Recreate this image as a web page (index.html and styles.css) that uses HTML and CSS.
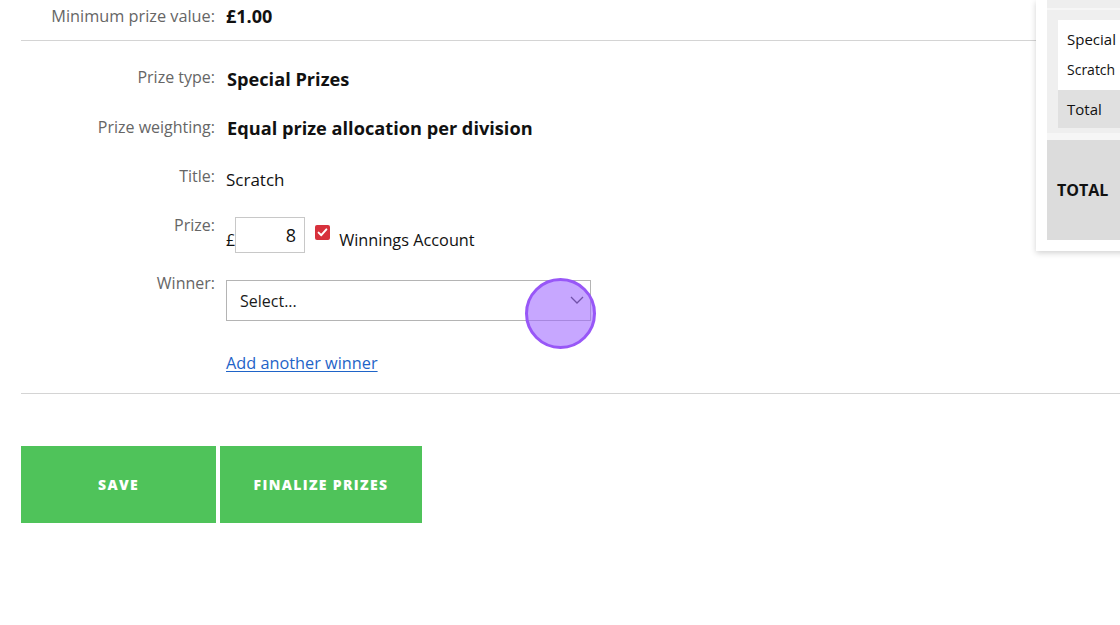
FILE: index.html
```html
<!DOCTYPE html>
<html>
<head>
<meta charset="utf-8">
<link rel="stylesheet" href="styles.css">
</head>
<body>
<div class="page">
  <div class="summary-row">
    <div class="row r1">
      <div class="label">Minimum prize value:</div>
      <div class="value money">£1.00</div>
    </div>
  </div>
  <hr class="rule rule-top">
  <div class="row r2">
    <div class="label">Prize type:</div>
    <div class="value strong">Special Prizes</div>
  </div>
  <div class="row r3">
    <div class="label">Prize weighting:</div>
    <div class="value strong">Equal prize allocation per division</div>
  </div>
  <div class="row r4">
    <div class="label">Title:</div>
    <div class="value plain">Scratch</div>
  </div>
  <div class="row r5">
    <div class="label">Prize:</div>
    <div class="value prize">
      <span class="pound">£</span>
      <span class="amount">8</span>
      <span class="check"><svg width="15" height="15" viewBox="0 0 15 15"><rect width="15" height="15" rx="2" fill="#d7313c"/><path d="M3.6 7.6 L6.3 10.2 L11.4 4.4" fill="none" stroke="#fff" stroke-width="2" stroke-linecap="round" stroke-linejoin="round"/></svg></span>
      <span class="check-label">Winnings Account</span>
    </div>
  </div>
  <div class="row r6">
    <div class="label">Winner:</div>
    <div class="value">
      <div class="select">
        <span>Select...</span>
        <svg class="chev" width="14" height="8" viewBox="0 0 14 8"><path d="M1 1 L7 7 L13 1" fill="none" stroke="#333" stroke-width="1.3"/></svg>
        <div class="click-dot"></div>
      </div>
    </div>
  </div>
  <div class="row r7">
    <div class="label"></div>
    <div class="value"><a class="link" href="#">Add another winner</a></div>
  </div>
  <hr class="rule rule-bottom">
  <div class="buttons">
    <button class="btn btn-save">SAVE</button>
    <button class="btn btn-final">FINALIZE PRIZES</button>
  </div>
</div>

<aside class="side-card">
  <div class="side-top"></div>
  <div class="side-section">
    <div class="side-table">
      <div class="side-head">Special Prizes</div>
      <div class="side-item">Scratch</div>
      <div class="side-total">Total</div>
    </div>
  </div>
  <div class="side-grand">TOTAL</div>
</aside>
</body>
</html>
```

FILE: styles.css
```css
html, body {
  margin: 0;
  padding: 0;
  background: #fff;
}
body {
  font-family: "Open Sans", "Noto Sans", sans-serif;
  color: #111;
  width: 1120px;
  height: 625px;
  overflow: hidden;
  position: relative;
}
.page {
  padding-left: 21px;
}
.summary-row {
  padding-top: 4px;
}
.row {
  display: grid;
  grid-template-columns: 194px 1fr;
  column-gap: 11px;
  align-items: start;
}
.label {
  text-align: right;
  font-size: 16px;
  line-height: 24px;
  color: #666;
}
.r1 .label { font-size: 16.3px; }
.value {
  line-height: 24px;
}
.money {
  font-size: 18px;
  font-weight: 700;
  color: #111;
}
.strong {
  font-size: 18.2px;
  font-weight: 700;
  color: #111;
  margin-left: 1px;
}
.plain {
  font-size: 17px;
  color: #111;
}
.rule {
  border: 0;
  height: 1px;
  margin: 0;
}
.rule-top {
  margin-top: 12px;
  background: #d4d4d4;
  width: 1015px;
}
.rule-bottom {
  margin-top: 18px;
  background: #d4d4d4;
}
.r2 { margin-top: 24px; }
.r2 .strong { padding-top: 2px; }
.r3 { margin-top: 24px; }
.r3 .strong { padding-top: 1px; }
.r4 { margin-top: 24px; }
.r4 .plain { padding-top: 4px; }
.r5 { margin-top: 21px; }
.prize {
  display: flex;
  align-items: flex-end;
  padding-top: 4px;
}
.pound {
  font-size: 16px;
  line-height: 24px;
  margin-bottom: 1px;
  color: #111;
}
.amount {
  box-sizing: border-box;
  width: 70px;
  height: 36px;
  border: 1px solid #c8c8c8;
  text-align: right;
  font-size: 18px;
  line-height: 34px;
  padding-right: 8px;
  color: #111;
}
.check {
  display: block;
  width: 15px;
  height: 15px;
  margin-left: 10px;
  margin-bottom: 13px;
}
.check svg { display: block; }
.check-label {
  font-size: 16.3px;
  line-height: 24px;
  margin-left: 9px;
  margin-bottom: 1px;
  color: #111;
}
.r6 { margin-top: 18px; }
.r6 .value { padding-top: 9px; }
.select {
  position: relative;
  box-sizing: border-box;
  width: 365px;
  height: 41px;
  border: 1px solid #b4b4b4;
  display: flex;
  align-items: center;
  padding-left: 13px;
  font-size: 16px;
  color: #1a1a1a;
}
.chev {
  position: absolute;
  right: 6px;
  top: 15px;
}
.click-dot {
  position: absolute;
  left: 298px;
  top: -3px;
  width: 65px;
  height: 65px;
  border-radius: 50%;
  border: 3px solid #9857f7;
  background: rgba(158, 104, 255, 0.58);
}
.r7 { margin-top: 30px; }
.link {
  font-size: 16.3px;
  color: #1f64c8;
  text-decoration: underline;
  text-underline-offset: 2px;
}
.buttons {
  display: flex;
  gap: 4px;
  margin-top: 52px;
}
.btn {
  border: 0;
  background: #4fc35a;
  color: #fff;
  font-family: "Open Sans", "Noto Sans", sans-serif;
  font-size: 14px;
  font-weight: 800;
  letter-spacing: 1.35px;
  height: 77px;
  padding: 0;
  cursor: pointer;
}
.btn-save { width: 195px; }
.btn-final { width: 202px; }

.side-card {
  position: absolute;
  left: 1036px;
  top: 0;
  width: 120px;
  height: 251px;
  background: #fff;
  box-shadow: 0 2px 6px rgba(0,0,0,0.18);
  box-sizing: border-box;
  padding: 0 0 11px 11px;
}
.side-top {
  height: 8px;
  background: #eeeeee;
  border-bottom: 2px solid #f6f6f6;
}
.side-section {
  background: #efefef;
  padding: 10px 0 5px 11px;
  border-bottom: 7px solid #f6f6f6;
}
.side-table {
  background: #fff;
}
.side-head {
  height: 34px;
  line-height: 38px;
  padding-left: 9px;
  font-size: 15px;
  color: #111;
  white-space: nowrap;
}
.side-item {
  height: 36px;
  line-height: 32px;
  padding-left: 9px;
  font-size: 14px;
  color: #111;
}
.side-total {
  height: 38px;
  line-height: 38px;
  background: #e0e0e0;
  padding-left: 9px;
  font-size: 15px;
  color: #111;
}
.side-grand {
  height: 100px;
  line-height: 100px;
  background: #dcdcdc;
  padding-left: 10px;
  font-size: 16px;
  font-weight: 700;
  color: #111;
}
```
